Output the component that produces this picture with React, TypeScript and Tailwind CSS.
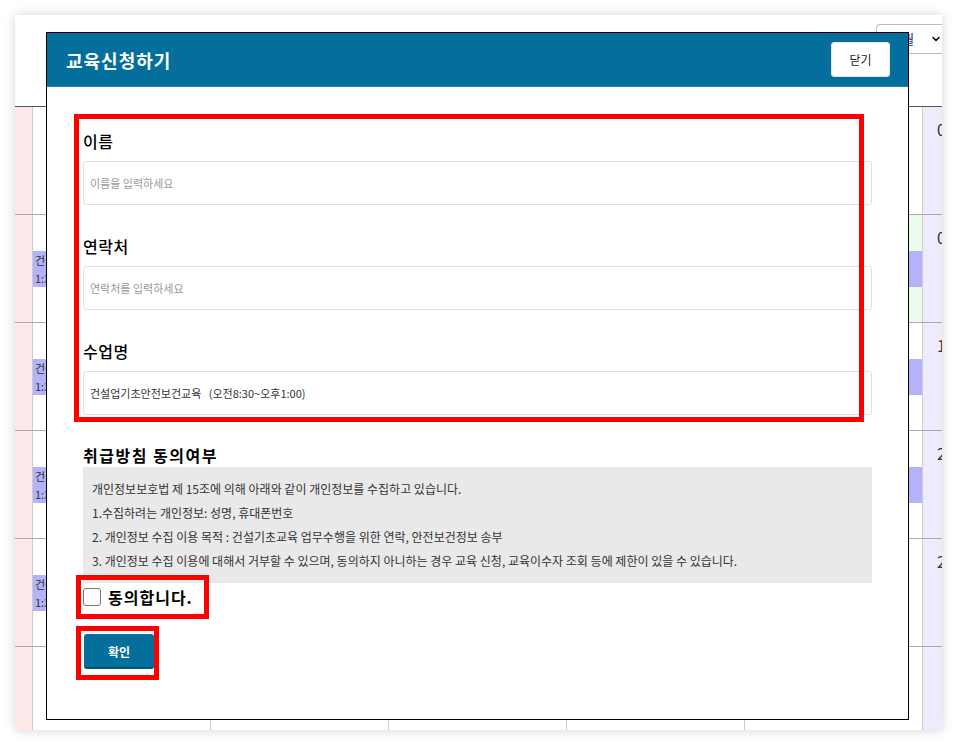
import React from "react";
import { ChevronDown } from "lucide-react";

const weeks = [
  { sat: "01", mon: false, fri: false, friGreen: false },
  { sat: "08", mon: true, fri: true, friGreen: true },
  { sat: "15", mon: true, fri: true, friGreen: false },
  { sat: "22", mon: true, fri: true, friGreen: false },
  { sat: "29", mon: true, fri: false, friGreen: false },
  { sat: "", mon: false, fri: false, friGreen: false },
];

function Bar() {
  return (
    <div className="mt-[36px] h-[36px] bg-[#b4b2f9] pl-[2px] text-[11px] leading-[18px] text-[#333] whitespace-nowrap overflow-hidden">
      <div>건설업기초안전보건교육</div>
      <div>1:30~5:30</div>
    </div>
  );
}

function Calendar() {
  return (
    <div className="w-[927px] h-[715px] bg-white shadow-[0_0_10px_rgba(0,0,0,0.18)] overflow-hidden flex flex-col">
      <div className="h-[91px] shrink-0 flex justify-end pt-[9px]">
        <div className="w-[66px] shrink-0 h-[30px] border border-[#bbb] rounded-l-[4px] border-r-0 flex items-center pl-[18px] gap-[16px] text-[13px] text-[#2a1f7a] whitespace-nowrap overflow-hidden">
          <span>6월</span>
          <ChevronDown size={12} strokeWidth={3} className="text-black shrink-0" />
        </div>
      </div>
      <div className="flex flex-col border-t border-[#555]">
        {weeks.map((w, i) => (
          <div
            key={i}
            className={
              "grid grid-cols-[17px_178px_178px_178px_178px_178px_178px] shrink-0 " +
              (i === 0 ? "h-[107px]" : "h-[108px] border-t border-[#aaa]")
            }
          >
            <div className="bg-[#fde9e9]"></div>
            <div className="border-l border-[#ccc]">{w.mon && <Bar />}</div>
            <div className="border-l border-[#ccc]"></div>
            <div className="border-l border-[#ccc]"></div>
            <div className="border-l border-[#ccc]"></div>
            <div className={"border-l border-[#ccc] " + (w.friGreen ? "bg-[#eafcea]" : "")}>
              {w.fri && <Bar />}
            </div>
            <div className="border-l border-[#ccc] bg-[#eeebff] pl-[14px] pt-[10px] text-[16px] leading-[24px] text-[#333]">
              {w.sat}
            </div>
          </div>
        ))}
      </div>
    </div>
  );
}

function Field({ label, placeholder, value, first }: { label: string; placeholder?: string; value?: string; first?: boolean }) {
  return (
    <div className={first ? "" : "mt-[29px]"}>
      <div className="text-[16px] font-medium leading-[24px] tracking-[0.5px] text-black">{label}</div>
      <input
        className="mt-[8px] block w-full h-[44px] border border-[#e0e0e0] rounded-[3px] px-[6px] text-[11px] text-[#333] placeholder:text-[#999] outline-none bg-white"
        placeholder={placeholder}
        defaultValue={value}
        readOnly={!!value}
      />
    </div>
  );
}

function Modal() {
  return (
    <div className="absolute left-[46px] top-[32px] w-[863px] h-[688px] border border-black bg-white flex flex-col">
      <div className="h-[54px] shrink-0 bg-[#046f9c] flex items-center justify-between pl-[19px] pr-[18px] border-b border-[#2a86ad]">
        <div className="text-[18px] font-bold text-white leading-none tracking-[1px]">교육신청하기</div>
        <button className="w-[59px] h-[35px] bg-white rounded-[3px] border border-[#dfe6ea] text-[12px] text-[#222]">
          닫기
        </button>
      </div>
      <div className="px-[36px] pt-[42px] flex flex-col">
        <Field label="이름" placeholder="이름을 입력하세요" first />
        <Field label="연락처" placeholder="연락처를 입력하세요" />
        <Field label="수업명" value="건설업기초안전보건교육   (오전8:30~오후1:00)" />
        <div className="mt-[29px] text-[16px] font-bold leading-[23px] tracking-[1.5px] text-black">취급방침 동의여부</div>
        <div className="bg-[#e9e9e9] pt-[10px] pb-[10px] px-[9px] text-[12px] leading-[24px] text-[#333] whitespace-nowrap">
          <div>개인정보보호법 제 15조에 의해 아래와 같이 개인정보를 수집하고 있습니다.</div>
          <div>1.수집하려는 개인정보: 성명, 휴대폰번호</div>
          <div>2. 개인정보 수집 이용 목적 : 건설기초교육 업무수행을 위한 연락, 안전보건정보 송부</div>
          <div>3. 개인정보 수집 이용에 대해서 거부할 수 있으며, 동의하지 아니하는 경우 교육 신청, 교육이수자 조회 등에 제한이 있을 수 있습니다.</div>
        </div>
        <div className="mt-[2px] h-[24px] flex items-center">
          <div className="w-[18px] h-[18px] border border-[#767676] rounded-[3px] bg-white shrink-0"></div>
          <span className="ml-[7px] text-[16px] font-semibold leading-[24px] tracking-[1px] text-black">동의합니다.</span>
        </div>
        <button className="mt-[25px] ml-[1px] w-[70px] h-[35px] bg-[#046f9c] text-white text-[12px] font-bold rounded-[3px] shadow-[inset_0_-2px_0_rgba(0,0,0,0.25)]">
          확인
        </button>
      </div>
    </div>
  );
}

export default function App() {
  return (
    <div className="relative w-[957px] h-[746px] bg-white overflow-hidden p-[15px] font-['Noto_Sans_CJK_KR',sans-serif]">
      <Calendar />
      <Modal />
      <div className="absolute left-[74px] top-[114px] w-[790px] h-[308px] border-[5px] border-[#ff0000] pointer-events-none"></div>
      <div className="absolute left-[76px] top-[575px] w-[133px] h-[44px] border-[5px] border-[#ff0000] pointer-events-none"></div>
      <div className="absolute left-[76px] top-[626px] w-[83px] h-[54px] border-[5px] border-[#ff0000] pointer-events-none"></div>
    </div>
  );
}
